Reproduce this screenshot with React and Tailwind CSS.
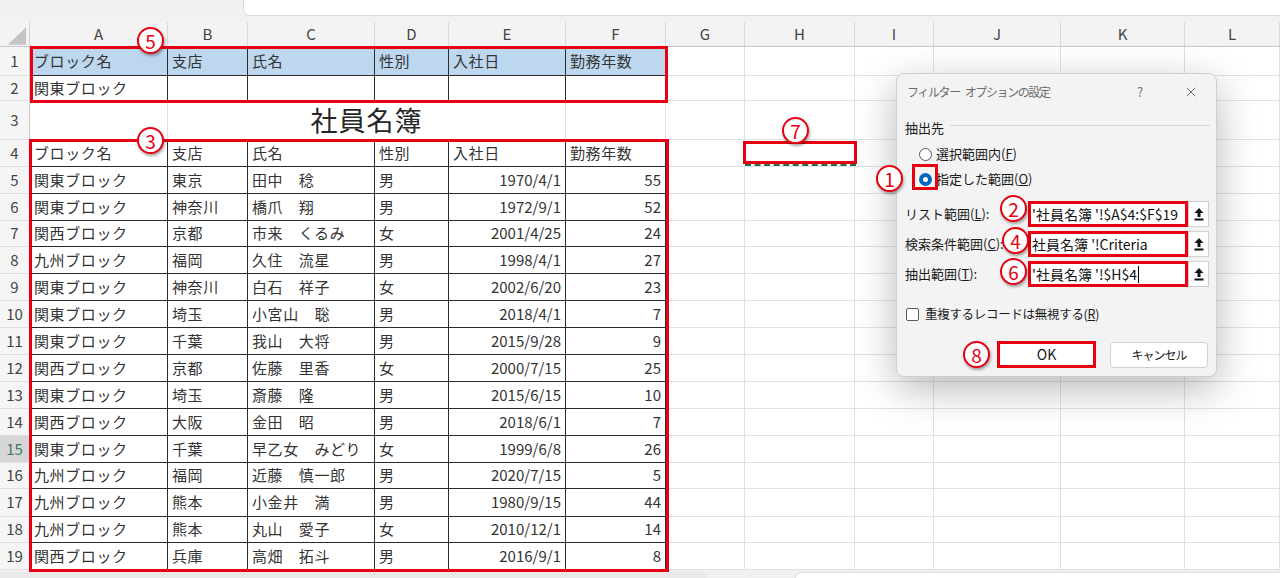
import React from 'react';
import { X } from 'lucide-react';

const FONT = { fontFamily: '"Noto Sans CJK JP", "Noto Sans", sans-serif' };

const colW = ['w-[138px]', 'w-[80px]', 'w-[127px]', 'w-[74px]', 'w-[117px]', 'w-[100px]', 'w-[79px]', 'w-[110px]', 'w-[79px]', 'w-[127px]', 'w-[124px]', 'w-[95px]'];
const letters = ['A', 'B', 'C', 'D', 'E', 'F', 'G', 'H', 'I', 'J', 'K', 'L'];
const rightAligned = [false, false, false, false, true, true];

const header = ['ブロック名', '支店', '氏名', '性別', '入社日', '勤務年数'];

const data = [
  ['関東ブロック', '東京', '田中　稔', '男', '1970/4/1', '55'],
  ['関東ブロック', '神奈川', '橋爪　翔', '男', '1972/9/1', '52'],
  ['関西ブロック', '京都', '市来　くるみ', '女', '2001/4/25', '24'],
  ['九州ブロック', '福岡', '久住　流星', '男', '1998/4/1', '27'],
  ['関東ブロック', '神奈川', '白石　祥子', '女', '2002/6/20', '23'],
  ['関東ブロック', '埼玉', '小宮山　聡', '男', '2018/4/1', '7'],
  ['関東ブロック', '千葉', '我山　大将', '男', '2015/9/28', '9'],
  ['関西ブロック', '京都', '佐藤　里香', '女', '2000/7/15', '25'],
  ['関東ブロック', '埼玉', '斎藤　隆', '男', '2015/6/15', '10'],
  ['関西ブロック', '大阪', '金田　昭', '男', '2018/6/1', '7'],
  ['関東ブロック', '千葉', '早乙女　みどり', '女', '1999/6/8', '26'],
  ['九州ブロック', '福岡', '近藤　慎一郎', '男', '2020/7/15', '5'],
  ['九州ブロック', '熊本', '小金井　満', '男', '1980/9/15', '44'],
  ['九州ブロック', '熊本', '丸山　愛子', '女', '2010/12/1', '14'],
  ['関西ブロック', '兵庫', '高畑　拓斗', '男', '2016/9/1', '8'],
];

function RowHead({ n, active }) {
  return (
    <div
      className={`w-[30px] shrink-0 h-full flex items-center justify-center border-r border-b border-r-[#c8c8c8] border-b-[#e0e0e0] text-[15px] ${
        active ? 'bg-[#d6d6d6] text-[#3d7a5c]' : 'bg-[#f5f5f5] text-[#444]'
      }`}
    >
      {n}
    </div>
  );
}

function Cell({ i, children, right, dark, bg = '' }) {
  return (
    <div
      className={`${colW[i]} shrink-0 h-full flex items-center border-r border-b whitespace-nowrap overflow-hidden text-[15px] text-[#333] ${
        dark ? 'border-[#2b2b2b]' : 'border-[#e1e1e1]'
      } ${right ? 'justify-end pr-[4px]' : 'pl-[4px] tracking-[0.6px]'} ${bg}`}
    >
      {children}
    </div>
  );
}

function EmptyRest({ from = 6 }) {
  return colW.slice(from).map((_, k) => <Cell key={k} i={from + k} />);
}

function TableRow({ n, h, cells, blue, active }) {
  return (
    <div className={`flex ${h}`}>
      <RowHead n={n} active={active} />
      {header.map((_, i) => (
        <Cell key={i} i={i} dark right={rightAligned[i] && !blue && n > 4} bg={blue ? 'bg-[#bdd7ee]' : ''}>
          {cells[i]}
        </Cell>
      ))}
      <EmptyRest />
    </div>
  );
}

function Badge({ n, pos }) {
  return (
    <div
      className={`absolute ${pos} w-[27px] h-[27px] rounded-full bg-white border-[2px] border-[#e60012] text-[#e60012] text-[19px] leading-none flex items-center justify-center shadow-[1px_2px_3px_rgba(0,0,0,0.35)]`}
    >
      {n}
    </div>
  );
}

function CollapseBtn() {
  return (
    <div className="w-[21px] h-[26px] bg-white border border-[#cfcfcf] flex items-center justify-center">
      <svg width="10" height="14" viewBox="0 0 10 14">
        <path d="M5 1 L9.5 6 L6.5 6 L6.5 10 L3.5 10 L3.5 6 L0.5 6 Z" fill="#111" />
        <rect x="0.5" y="11.5" width="9" height="2" fill="#111" />
      </svg>
    </div>
  );
}

function RangeInput({ children, cursor }) {
  return (
    <div className="w-[160px] h-[26px] bg-white border-[3px] border-[#e60012] flex items-center pl-[1px] text-[14px] text-[#111] whitespace-nowrap overflow-hidden">
      {children}
      {cursor && <span className="inline-block w-[1px] h-[17px] bg-black ml-[1px]" />}
    </div>
  );
}

export default function App() {
  const rowHeights = ['h-[27px]', 'h-[27px]', 'h-[27px]', 'h-[26px]', 'h-[27px]', 'h-[27px]', 'h-[27px]', 'h-[27px]', 'h-[27px]', 'h-[27px]', 'h-[27px]', 'h-[27px]', 'h-[26px]', 'h-[28px]', 'h-[26px]', 'h-[27px]'];
  return (
    <div className="relative w-[1280px] h-[578px] overflow-hidden bg-white select-none" style={FONT}>
      {/* top strip */}
      <div className="h-[22px] flex bg-[#f1f1f1]">
        <div className="w-[243px] shrink-0" />
        <div className="flex-1 h-[16px] bg-white border-l border-b border-[#dcdcdc] rounded-bl-[6px]" />
      </div>

      {/* column headers */}
      <div className="flex h-[25px] bg-[#f3f3f3]">
        <div className="w-[30px] shrink-0 h-full border-r border-b border-r-[#d0d0d0] border-b-[#c8c8c8] flex">
          <svg width="30" height="25" viewBox="0 0 30 25">
            <polygon points="27,5 27,23 8,23" fill="#c4c4c4" />
          </svg>
        </div>
        {letters.map((l, i) => (
          <div
            key={l}
            className={`${colW[i]} shrink-0 h-full flex items-center justify-center border-r border-b border-r-[#d8d8d8] border-b-[#c8c8c8] text-[15px] text-[#444]`}
          >
            {l}
          </div>
        ))}
      </div>

      {/* row 1 */}
      <TableRow n={1} h="h-[29px]" cells={header} blue />
      {/* row 2 */}
      <TableRow n={2} h="h-[25px]" cells={['関東ブロック', '', '', '', '', '']} />
      {/* row 3 */}
      <div className="flex h-[39px]">
        <RowHead n={3} />
        <Cell i={0} />
        <div className="w-[398px] shrink-0 h-full flex items-center justify-center border-r border-b border-[#e1e1e1] text-[27px] text-[#262626] tracking-[1px]">
          社員名簿
        </div>
        <Cell i={5} />
        <EmptyRest />
      </div>
      {/* row 4 header */}
      <TableRow n={4} h={rowHeights[0]} cells={header} />
      {data.map((r, k) => (
        <TableRow key={k} n={k + 5} h={rowHeights[k + 1]} cells={r} active={k + 5 === 15} />
      ))}

      {/* bottom strip */}
      <div className="h-[8px] flex bg-[#f0f0f0]">
        <div className="w-[707px] shrink-0 h-full bg-[#e9e9e9] rounded-tr-[6px] mt-[2px]" />
        <div className="w-[88px] shrink-0" />
        <div className="flex-1 h-full bg-white rounded-tl-[6px] mt-[2px] border-t border-l border-[#dddddd]" />
      </div>

      {/* annotation: red rectangles over the sheet */}
      <div className="absolute left-[30px] top-[46px] w-[638px] h-[57px] border-[3px] border-[#e60012]" />
      <div className="absolute left-[29px] top-[139px] w-[640px] h-[433px] border-[3px] border-[#e60012]" />
      <div className="absolute left-[745px] top-[141px] w-[111px] h-[25px] border-2 border-dashed border-[#217346]" />
      <div className="absolute left-[743px] top-[141px] w-[114px] h-[23px] border-[3px] border-[#e60012] bg-white" />

      <Badge n="5" pos="left-[137px] top-[27px]" />
      <Badge n="3" pos="left-[137px] top-[127px]" />
      <Badge n="7" pos="left-[782px] top-[117px]" />

      {/* dialog */}
      <div className="absolute left-[896px] top-[73px] w-[321px] h-[304px] bg-[#f3f3f3] border border-[#cfcfcf] rounded-[8px] shadow-[0_12px_40px_rgba(0,0,0,0.28)] flex flex-col text-[#1a1a1a]">
        <div className="h-[36px] flex items-center pl-[10px] relative">
          <span className="text-[12px] tracking-[-1.4px] text-[#6b6b6b]">フィルター</span>
          <span className="ml-[5px] text-[12px] tracking-[-1.4px] text-[#6b6b6b]">オプションの設定</span>
          <span className="absolute left-[240px] text-[13px] text-[#777]">?</span>
          <X className="absolute left-[286px]" size={16} strokeWidth={1.2} color="#555" />
        </div>
        <div className="mt-[8px] h-[20px] flex items-center pl-[8px] pr-[6px]">
          <span className="text-[13px]">抽出先</span>
          <div className="flex-1 h-px bg-[#d6d6d6] ml-[6px] -mt-[5px]" />
        </div>
        <div className="mt-[6px] h-[20px] flex items-center pl-[22px]">
          <span className="w-[13px] h-[13px] rounded-full border border-[#5a5a5a] bg-white" />
          <span className="ml-[4px] text-[13px]">
            選択範囲内(<span className="underline">F</span>)
          </span>
        </div>
        <div className="mt-[5px] h-[20px] flex items-center pl-[22px] relative">
          <span className="w-[13px] h-[13px] rounded-full bg-[#0067c0] flex items-center justify-center">
            <span className="w-[5px] h-[5px] rounded-full bg-white" />
          </span>
          <span className="ml-[4px] text-[13px]">
            指定した範囲(<span className="underline">O</span>)
          </span>
          <div className="absolute left-[15px] top-[-5px] w-[26px] h-[26px] border-[3px] border-[#e60012]" />
        </div>

        <div className="mt-[12px] h-[26px] flex items-center pl-[8px]">
          <span className="w-[123px] text-[13px]">
            リスト範囲(<span className="underline">L</span>):
          </span>
          <RangeInput>'社員名簿 '!$A$4:$F$19</RangeInput>
          <CollapseBtn />
        </div>
        <div className="mt-[4px] h-[26px] flex items-center pl-[8px]">
          <span className="w-[123px] text-[13px] whitespace-nowrap">
            検索条件範囲(<span className="underline">C</span>):
          </span>
          <RangeInput>社員名簿 '!Criteria</RangeInput>
          <CollapseBtn />
        </div>
        <div className="mt-[4px] h-[26px] flex items-center pl-[8px]">
          <span className="w-[123px] text-[13px]">
            抽出範囲(<span className="underline">T</span>):
          </span>
          <RangeInput cursor>'社員名簿 '!$H$4</RangeInput>
          <CollapseBtn />
        </div>

        <div className="mt-[17px] h-[20px] flex items-center pl-[9px]">
          <span className="w-[13px] h-[13px] rounded-[2px] border border-[#5a5a5a] bg-white" />
          <span className="ml-[6px] text-[12.5px] tracking-[-0.3px]">
            重複するレコードは無視する(<span className="underline">R</span>)
          </span>
        </div>

        <div className="mt-[17px] h-[27px] flex items-center pl-[100px] gap-[14px]">
          <div className="w-[99px] h-[27px] bg-white border-[3px] border-[#e60012] flex items-center justify-center text-[14px]">
            OK
          </div>
          <div className="w-[98px] h-[26px] bg-white border border-[#d0d0d0] rounded-[4px] flex items-center justify-center text-[12px] tracking-[-1px]">
            キャンセル
          </div>
        </div>
      </div>

      <Badge n="1" pos="left-[876px] top-[165px]" />
      <Badge n="2" pos="left-[1000px] top-[195px]" />
      <Badge n="4" pos="left-[1002px] top-[227px]" />
      <Badge n="6" pos="left-[1000px] top-[258px]" />
      <Badge n="8" pos="left-[963px] top-[341px]" />
    </div>
  );
}
